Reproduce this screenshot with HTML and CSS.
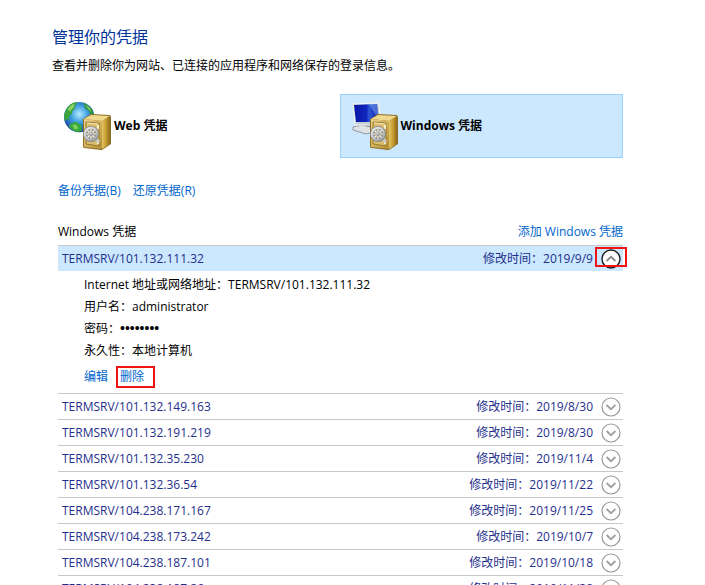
FILE: index.html
```html
<!DOCTYPE html>
<html lang="zh-CN">
<head>
    <meta charset="UTF-8">
    <meta name="viewport" content="width=device-width, initial-scale=1.0">
    <title>凭据管理器</title>
    <link rel="stylesheet" href="styles.css">
</head>
<body>

    <!-- Shared drawings: the safe and the chevrons -->
    <svg class="defs" width="0" height="0" aria-hidden="true">
        <defs>
            <linearGradient id="gold" x1="0" y1="0" x2="1" y2="1">
                <stop offset="0" stop-color="#e9d391"/>
                <stop offset="0.5" stop-color="#d3b45c"/>
                <stop offset="1" stop-color="#b08b31"/>
            </linearGradient>
            <linearGradient id="goldSide" x1="0" y1="0" x2="1" y2="0">
                <stop offset="0" stop-color="#e2c565"/>
                <stop offset="0.5" stop-color="#c79d32"/>
                <stop offset="1" stop-color="#8c6b1c"/>
            </linearGradient>
            <radialGradient id="steel" cx="0.4" cy="0.35" r="0.7">
                <stop offset="0" stop-color="#ffffff"/>
                <stop offset="0.6" stop-color="#cfd1d2"/>
                <stop offset="1" stop-color="#8f9294"/>
            </radialGradient>
            <radialGradient id="ocean" cx="0.5" cy="0.4" r="0.62">
                <stop offset="0" stop-color="#b4ecfd"/>
                <stop offset="0.45" stop-color="#3f9ddf"/>
                <stop offset="1" stop-color="#123f9a"/>
            </radialGradient>
            <linearGradient id="screen" x1="0" y1="0" x2="1" y2="0">
                <stop offset="0" stop-color="#0817a6"/>
                <stop offset="0.5" stop-color="#1026bd"/>
                <stop offset="0.6" stop-color="#2f57d4"/>
                <stop offset="1" stop-color="#0c1fae"/>
            </linearGradient>
            <symbol id="safe" viewBox="0 0 30 38">
                <path d="M1 6 L9 1 L28 2 L29 4 V31 L20 37 L19 37 L2 35 L1 34 Z" fill="#8f6f25"/>
                <path d="M2 6 L9 2 L28 3 L20 8 Z" fill="#efd98e"/>
                <path d="M20 8 L28 3 V31 L20 36 Z" fill="url(#goldSide)"/>
                <path d="M2 6 L20 8 V36 L2 34 Z" fill="url(#gold)"/>
                <path d="M4 9 L17 10 V33 L4 31 Z" fill="#dabd6d" stroke="#9a7a30" stroke-width="1"/>
                <path d="M5 10 L16 11" stroke="#f5e8b8" stroke-width="1"/>
                <path d="M16 12 V16 M16 27 V31" stroke="#f7edc8" stroke-width="2"/>
                <path d="M12 24 L17 29" stroke="#c9cbcc" stroke-width="3"/>
                <circle cx="9" cy="21" r="8" fill="#8a887e"/>
                <circle cx="9" cy="21" r="7.3" fill="url(#steel)"/>
                <circle cx="9" cy="21" r="4.8" fill="#a59c80" stroke="#86888a" stroke-width="0.8"/>
                <path d="M9 16 V26 M4 21 H14 M5.5 17.5 L12.5 24.5 M12.5 17.5 L5.5 24.5" stroke="#eceded" stroke-width="1.2"/>
                <circle cx="9" cy="21" r="2" fill="#8f9295"/>
                <circle cx="8.6" cy="20.6" r="1" fill="#e4e6e7"/>
            </symbol>
            <symbol id="chevron-up" viewBox="0 0 20 20">
                <circle cx="10" cy="10" r="9" fill="#fff" stroke="#1c1c1c" stroke-width="1.4"/>
                <path d="M5.6 12 L10 7.8 L14.4 12" fill="none" stroke="#8a8a8a" stroke-width="1.8"/>
            </symbol>
            <symbol id="chevron-down" viewBox="0 0 20 20">
                <circle cx="10" cy="10" r="9" fill="#fff" stroke="#999" stroke-width="1.2"/>
                <path d="M5.6 8 L10 12.2 L14.4 8" fill="none" stroke="#a0a0a0" stroke-width="1.8"/>
            </symbol>
        </defs>
    </svg>

    <main class="page">
        <h1>管理你的凭据</h1>
        <p class="intro">查看并删除你为网站、已连接的应用程序和网络保存的登录信息。</p>

        <!-- Credential type switch -->
        <div class="vaults">
            <button type="button" class="vault">
                <svg width="50" height="54" viewBox="0 0 50 54" aria-hidden="true">
                    <g transform="translate(0 1) scale(0.95)">
                        <circle cx="16" cy="18" r="16" fill="url(#ocean)"/>
                        <path d="M2 11 Q5 4 12 2 L14 4 L11 6 L12 9 L9 11 L8 15 L5 17 L6 21 L3 20 L1 22 Q-1 15 2 11 Z" fill="#3aa53a"/>
                        <path d="M4 10 Q7 5 11 4 L10 8 L6 12 Z" fill="#8fd36a"/>
                        <path d="M19 3 Q28 5 31 13 L31 17 L28 16 L26 11 L22 9 L22 6 Z" fill="#2a9440"/>
                        <path d="M22 5 L27 8 L29 13 L26 10 Z" fill="#80ca5b"/>
                        <path d="M7 25 L12 23 L18 26 L19 32 L14 34 Q8 32 5 28 Z" fill="#37a93d"/>
                        <path d="M9 26 L13 26 L15 30 L11 31 Z" fill="#82d160"/>
                    </g>
                    <use href="#safe" x="18" y="14" width="30" height="38"/>
                </svg>
                Web 凭据
            </button>
            <button type="button" class="vault selected">
                <svg width="49" height="54" viewBox="1 0 49 54" aria-hidden="true">
                    <path d="M12 25 L19 25 L19 31 L11 29 Z" fill="#8e9499"/>
                    <path d="M2 28 L11 26 L24 29 V33 L15 35 L2 31 Z" fill="#dfe3e6" stroke="#92999e" stroke-width="1"/>
                    <path d="M2 5 L26 4 Q28 4 28 6 L30 26 L4 26 Z" fill="#c9d0d6" stroke="#f4f6f7" stroke-width="1"/>
                    <path d="M3 6 L26 5 L28 23 L5 23 Z" fill="url(#screen)"/>
                    <path d="M18 5 L26 5 L28 21 Z" fill="#7faaf1" opacity="0.5"/>
                    <use href="#safe" x="18" y="14" width="30" height="38"/>
                </svg>
                Windows 凭据
            </button>
        </div>

        <div class="links">
            <a href="#">备份凭据(B)</a>
            <a href="#">还原凭据(R)</a>
        </div>

        <section class="credentials">
            <div class="section-head">
                <h2>Windows 凭据</h2>
                <a href="#">添加 Windows 凭据</a>
            </div>

            <div class="row open">
                <span class="name">TERMSRV/101.132.111.32</span>
                <span>修改时间：2019/9/9</span>
                <button type="button" class="toggle marked" aria-label="折叠"><svg width="20" height="20"><use href="#chevron-up"/></svg></button>
            </div>
            <div class="details">
                <p>Internet 地址或网络地址：TERMSRV/101.132.111.32</p>
                <p>用户名：administrator</p>
                <p>密码：<span class="password">••••••••</span></p>
                <p>永久性：本地计算机</p>
                <div class="actions">
                    <a href="#">编辑</a>
                    <a href="#" class="remove">删除</a>
                </div>
            </div>

            <div class="row">
                <span class="name">TERMSRV/101.132.149.163</span>
                <span>修改时间：2019/8/30</span>
                <button type="button" class="toggle" aria-label="展开"><svg width="20" height="20"><use href="#chevron-down"/></svg></button>
            </div>
            <div class="row">
                <span class="name">TERMSRV/101.132.191.219</span>
                <span>修改时间：2019/8/30</span>
                <button type="button" class="toggle" aria-label="展开"><svg width="20" height="20"><use href="#chevron-down"/></svg></button>
            </div>
            <div class="row">
                <span class="name">TERMSRV/101.132.35.230</span>
                <span>修改时间：2019/11/4</span>
                <button type="button" class="toggle" aria-label="展开"><svg width="20" height="20"><use href="#chevron-down"/></svg></button>
            </div>
            <div class="row">
                <span class="name">TERMSRV/101.132.36.54</span>
                <span>修改时间：2019/11/22</span>
                <button type="button" class="toggle" aria-label="展开"><svg width="20" height="20"><use href="#chevron-down"/></svg></button>
            </div>
            <div class="row">
                <span class="name">TERMSRV/104.238.171.167</span>
                <span>修改时间：2019/11/25</span>
                <button type="button" class="toggle" aria-label="展开"><svg width="20" height="20"><use href="#chevron-down"/></svg></button>
            </div>
            <div class="row">
                <span class="name">TERMSRV/104.238.173.242</span>
                <span>修改时间：2019/10/7</span>
                <button type="button" class="toggle" aria-label="展开"><svg width="20" height="20"><use href="#chevron-down"/></svg></button>
            </div>
            <div class="row">
                <span class="name">TERMSRV/104.238.187.101</span>
                <span>修改时间：2019/10/18</span>
                <button type="button" class="toggle" aria-label="展开"><svg width="20" height="20"><use href="#chevron-down"/></svg></button>
            </div>
            <div class="row">
                <span class="name">TERMSRV/104.238.187.26</span>
                <span>修改时间：2019/11/28</span>
                <button type="button" class="toggle" aria-label="展开"><svg width="20" height="20"><use href="#chevron-down"/></svg></button>
            </div>
        </section>
    </main>

</body>
</html>
```
FILE: styles.css
```css
body {
    font-family: "Open Sans", "Noto Sans CJK SC", sans-serif;
    font-size: 12px;
    line-height: 22px;
    color: #000;
    background: #fff;
    margin: 0;
    height: 100vh;
    overflow: hidden;
}
h1, h2, p {
    margin: 0;
    font-weight: normal;
}
a {
    color: #0066cc;
    text-decoration: none;
}
button {
    font: inherit;
    color: inherit;
    background: none;
    border: none;
    padding: 0;
    cursor: pointer;
}
svg {
    display: block;
    flex: none;
}
.defs {
    position: absolute;
}
.page {
    padding: 24px 82px 0 52px;
}
h1 {
    font-size: 16px;
    line-height: 26px;
    color: #003399;
}
.intro {
    margin-top: 5px;
}

/* Web / Windows switch */
.vaults {
    display: grid;
    grid-template-columns: 1fr 1fr;
    gap: 4px;
    margin-top: 17px;
}
.vault {
    display: flex;
    align-items: center;
    height: 64px;
    padding-left: 11px;
    border: 1px solid transparent;
    font-weight: bold;
}
.vault.selected {
    background: #cce8ff;
    border-color: #99d1ff;
}
.links {
    display: flex;
    gap: 12px;
    margin: 22px 0 0 6px;
}

/* Saved credentials */
.credentials {
    margin: 19px 0 0 6px;
}
.section-head {
    display: flex;
    justify-content: space-between;
    padding-bottom: 2px;
}
h2 {
    font-size: 12px;
}
.row {
    display: flex;
    align-items: center;
    height: 25px;
    padding: 0 2px 0 4px;
    border-top: 1px solid #c8c8c8;
    color: #1f2f8c;
}
.row.open {
    background: #cce8ff;
}
.name {
    flex: 1;
}
.toggle {
    margin-left: 8px;
}
/* Red outline over the open toggle */
.marked {
    position: relative;
}
.marked::after {
    content: "";
    position: absolute;
    inset: -2px -6px 2px;
    border: 2px solid #f01414;
}
.details {
    padding: 3px 0 5px 26px;
}
.password {
    font-family: "Liberation Sans", sans-serif;
    font-size: 14px;
    line-height: 1;
}
.actions {
    display: flex;
    gap: 8px;
    margin-top: 4px;
}
.remove {
    line-height: 18px;
    padding: 0 9px 0 2px;
    border: 2px solid #f01414;
}
```
